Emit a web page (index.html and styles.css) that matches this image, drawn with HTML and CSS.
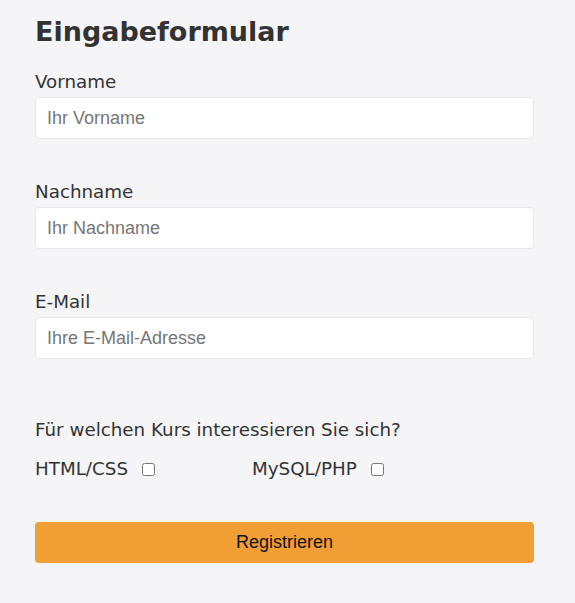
FILE: index.html
```html
<!DOCTYPE html>
<html lang="de">
<head>
<meta charset="utf-8">
<title>Eingabeformular</title>
<link rel="stylesheet" href="styles.css">
</head>
<body>
<form class="form">
  <h1 class="title">Eingabeformular</h1>
  <div class="field">
    <label class="label" for="vorname">Vorname</label>
    <input class="input" id="vorname" type="text" placeholder="Ihr Vorname">
  </div>
  <div class="field">
    <label class="label" for="nachname">Nachname</label>
    <input class="input" id="nachname" type="text" placeholder="Ihr Nachname">
  </div>
  <div class="field">
    <label class="label" for="email">E-Mail</label>
    <input class="input" id="email" type="email" placeholder="Ihre E-Mail-Adresse">
  </div>
  <p class="question">Für welchen Kurs interessieren Sie sich?</p>
  <div class="courses">
    <label class="course course-first">HTML/CSS <input class="check" type="checkbox"></label>
    <label class="course">MySQL/PHP <input class="check" type="checkbox"></label>
  </div>
  <button class="submit" type="button">Registrieren</button>
</form>
</body>
</html>
```

FILE: styles.css
```css
html, body {
  margin: 0;
  padding: 0;
  background: #f5f5f7;
}
body {
  font-family: "DejaVu Sans", Verdana, sans-serif;
  color: #333;
}
.form {
  width: 499px;
  padding: 14px 0 0 35px;
  display: flex;
  flex-direction: column;
}
.title {
  margin: 0 0 22px 0;
  font-size: 27px;
  font-weight: bold;
  line-height: 36px;
  color: #333;
}
.field {
  display: flex;
  flex-direction: column;
  margin-bottom: 43px;
}
.label {
  font-size: 18.3px;
  line-height: 20px;
  margin-bottom: 5px;
}
.input {
  box-sizing: border-box;
  height: 42px;
  width: 100%;
  margin: 0;
  padding: 0 11px;
  border: 1px solid #e8e8ea;
  border-radius: 4px;
  background: #fff;
  font-family: "Liberation Sans", Arial, sans-serif;
  font-size: 18px;
  color: #333;
  outline: none;
}
.input::placeholder {
  color: #767676;
}
.question {
  margin: 18px 0 0 0;
  font-size: 18.3px;
  line-height: 20px;
}
.courses {
  display: flex;
  margin-top: 19px;
}
.course {
  display: flex;
  align-items: center;
  font-size: 18.3px;
  line-height: 20px;
}
.course-first {
  width: 217px;
}
.check {
  margin: 0 0 0 14px;
  width: 13px;
  height: 13px;
}
.submit {
  margin-top: 43px;
  height: 41px;
  width: 100%;
  border: none;
  border-radius: 4px;
  background: #f19e35;
  font-family: "Liberation Sans", Arial, sans-serif;
  font-size: 18px;
  color: #111;
  cursor: pointer;
}
```
